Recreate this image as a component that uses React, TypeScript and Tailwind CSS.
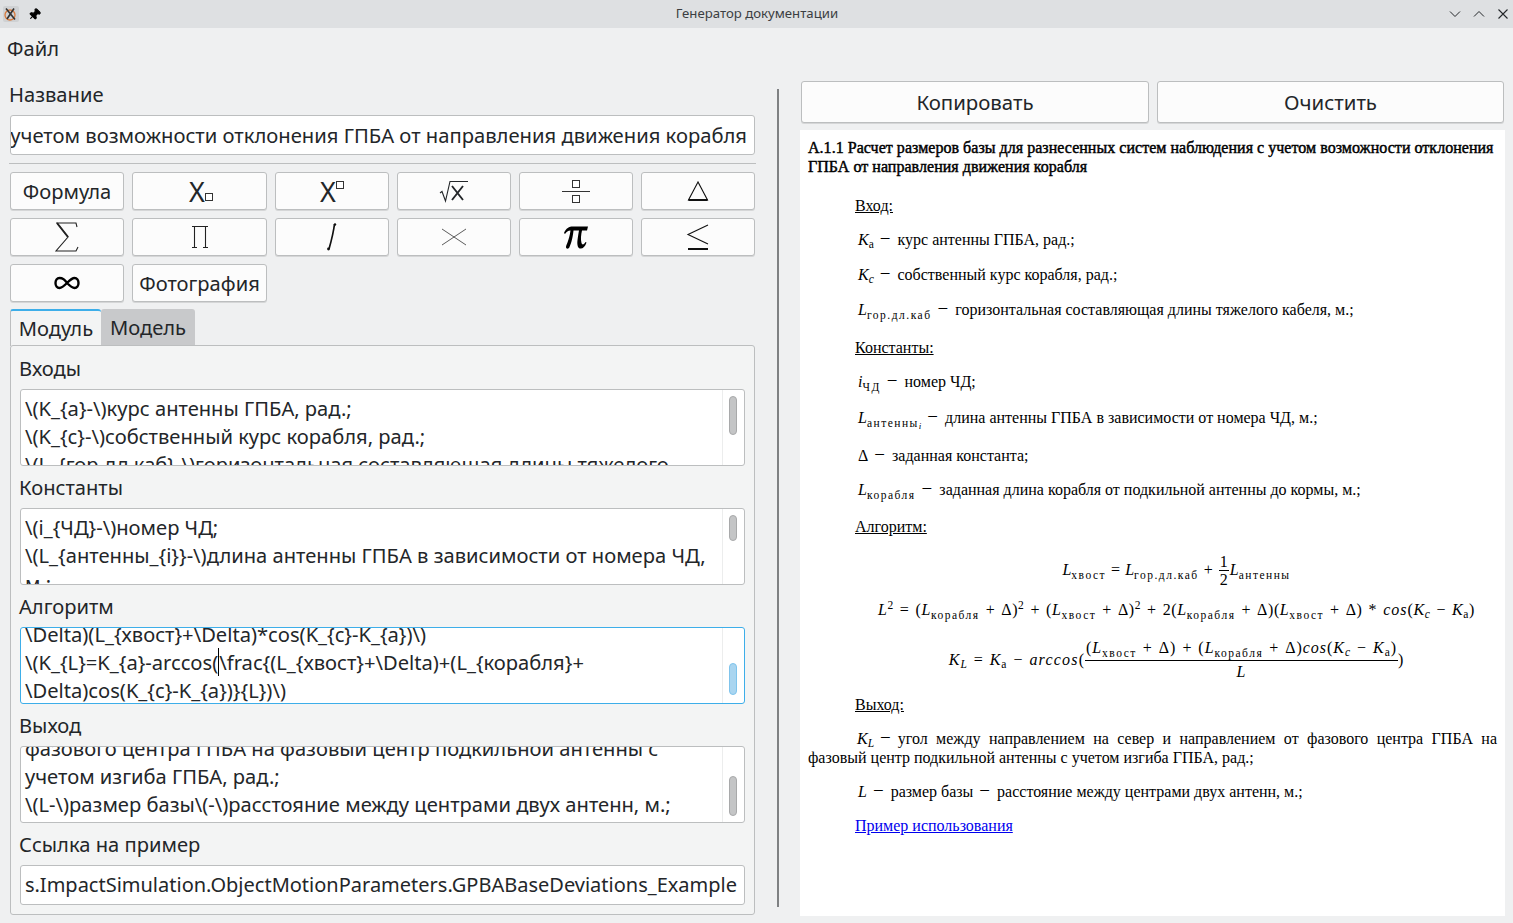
import { Pin } from "lucide-react";
import type { ReactNode } from "react";

const ui = "font-['Noto_Sans',sans-serif] text-[#232629]";

function Sq({ className }: { className: string }) {
    return <span className={`inline-block border border-[#333] bg-white ${className}`} />;
}

function Btn({ children, className = "" }: { children: ReactNode; className?: string }) {
    return (
        <button className={`flex items-center justify-center h-[38px] bg-[#fcfcfc] border border-[#bcbebf] rounded-[3px] shadow-[0_1px_0_#d5d6d7] overflow-hidden ${className}`}>
            {children}
        </button>
    );
}

function Area({ lines, offset, thumb, focus = false, cursor = false }: { lines: string[]; offset: string; thumb: string; focus?: boolean; cursor?: boolean }) {
    return (
        <div className={`flex h-[77px] bg-white rounded-[3px] border overflow-hidden ${focus ? "border-[#3daee9]" : "border-[#bcbebf]"}`}>
            <div className="flex-1 overflow-hidden pl-[4px] text-[20.15px] leading-[28px] whitespace-nowrap">
                <div className={offset}>
                    {lines.map((l, i) =>
                        cursor && i === 1 ? (
                            <div key={i}>
                                \(K_&#123;L&#125;=K_&#123;a&#125;-arccos(<span className="border-l border-black">\</span>frac&#123;(L_&#123;хвост&#125;+\Delta)+(L_&#123;корабля&#125;+
                            </div>
                        ) : (
                            <div key={i}>{l}</div>
                        )
                    )}
                </div>
            </div>
            <div className="w-[22px] shrink-0 border-l border-[#eceded] pl-[6px]">
                <div className={`w-[8px] rounded-full border ${focus ? "bg-[#a9d5f0] border-[#7fc4ec]" : "bg-[#c4c5c6] border-[#a8a9aa]"} ${thumb}`} />
            </div>
        </div>
    );
}

function Sub({ children }: { children: ReactNode }) {
    return <span className="text-[11.5px] leading-[0] align-[-4px] tracking-[1.5px]">{children}</span>;
}

// latin indices are italic, the cyrillic "а" index stays upright
function K({ s, up = false }: { s: string; up?: boolean }) {
    return (
        <span>
            <i>K</i>
            <span className={`text-[11.5px] leading-[0] align-[-3px] ${up ? "" : "italic"}`}>{s}</span>
        </span>
    );
}

function L({ s }: { s: string }) {
    return (
        <span>
            <i>L</i>
            <Sub>{s}</Sub>
        </span>
    );
}

function Sup() {
    return <span className="text-[11.5px] leading-[0] align-[6px]">2</span>;
}

function Op({ c }: { c: string }) {
    return <span className="mx-[5px]">{c}</span>;
}

function Op2({ c }: { c: string }) {
    return <span className="mx-[6px]">{c}</span>;
}

function Head({ children, className }: { children: ReactNode; className: string }) {
    return <p className={`pl-[47px] leading-[19px] underline ${className}`}>{children}</p>;
}

function Row({ children, className }: { children: ReactNode; className: string }) {
    return <p className={`pl-[50px] leading-[19px] ${className}`}>{children}</p>;
}

function Dash() {
    return <span className="ml-[6px] mr-[7px] text-[19px] leading-[0]">−</span>;
}

function Label({ children, className }: { children: ReactNode; className: string }) {
    return <div className={`h-[28px] leading-[28px] -ml-px ${className}`}>{children}</div>;
}

export default function App() {
    return (
        <div className={`flex flex-col h-screen w-full bg-[#eff0f1] overflow-hidden ${ui}`}>
            <div className="flex items-center shrink-0 h-[28px] bg-[#dee0e2] px-[3px]">
                <div className="flex items-center justify-center w-[16px] h-[16px] bg-[#cfd1d3] rounded-[2px]">
                    <svg width="14" height="14" viewBox="0 0 14 14">
                        <circle cx="6" cy="8" r="5" fill="none" stroke="#d9793a" strokeWidth="1.3" />
                        <path d="M2 1.5 L11 12.5 M10 1.5 L3 12" stroke="#333" strokeWidth="1.6" />
                    </svg>
                </div>
                <Pin size={13} className="ml-[9px] rotate-45 text-black fill-black" />
                <div className="flex-1 text-center text-[13.2px] text-[#3b3e41] pl-[26px]">Генератор документации</div>
                <div className="flex items-center gap-[8px] -mr-[1px]">
                    <svg width="16" height="16" viewBox="0 0 16 16" fill="none" stroke="#232629" strokeWidth="1">
                        <path d="M3 5.5 L8 10.5 L13 5.5" />
                    </svg>
                    <svg width="16" height="16" viewBox="0 0 16 16" fill="none" stroke="#232629" strokeWidth="1">
                        <path d="M3 10.5 L8 5.5 L13 10.5" />
                    </svg>
                    <svg width="16" height="16" viewBox="0 0 16 16" fill="none" stroke="#232629" strokeWidth="1.1">
                        <path d="M3.5 3.5 L12.5 12.5 M12.5 3.5 L3.5 12.5" />
                    </svg>
                </div>
            </div>

            <div className="shrink-0 h-[42px] flex items-center pl-[7px] text-[20.15px] pb-[2px]">Файл</div>

            <div className="flex flex-1 min-h-0 text-[20.15px]">
                <div className="flex flex-col w-[745px] ml-[10px] shrink-0">
                    <Label className="mt-[10px]">Название</Label>
                    <div className="flex items-center justify-end h-[40px] mt-[7px] bg-white border border-[#bcbebf] rounded-[3px] overflow-hidden pr-[7px] whitespace-nowrap text-[20.22px]">
                        с учетом возможности отклонения ГПБА от направления движения корабля
                    </div>
                    <div className="h-px bg-[#bcbebf] mt-[8px] -mx-[1px]" />
                    <div className="grid grid-cols-[114px_135px_114px_114px_114px_114px] gap-x-[8px] gap-y-[8px] mt-[8px]">
                        <Btn>Формула</Btn>
                        <Btn>
                            <span className="text-[27px] leading-none font-['Noto_Sans'] ml-[3px]">X</span>
                            <Sq className="w-[8px] h-[8px] mt-[12px]" />
                        </Btn>
                        <Btn>
                            <span className="text-[27px] leading-none font-['Noto_Sans']">X</span>
                            <Sq className="w-[8px] h-[8px] mb-[12px]" />
                        </Btn>
                        <Btn>
                            <svg width="30" height="24" viewBox="0 0 30 24" fill="none" stroke="#232629" strokeWidth="1.1">
                                <path d="M1 14 L3 12.5 L6.5 22 L11 2.5 H29" />
                                <path d="M13 7 L24 21 M24 7 L13 21" strokeWidth="1.9" />
                            </svg>
                        </Btn>
                        <Btn>
                            <div className="flex flex-col items-center gap-[3px]">
                                <Sq className="w-[8px] h-[8px]" />
                                <div className="w-[28px] h-px bg-[#333]" />
                                <Sq className="w-[8px] h-[8px]" />
                            </div>
                        </Btn>
                        <Btn>
                            <svg width="24" height="24" viewBox="0 0 24 24" fill="none" stroke="#111" strokeWidth="1.1">
                                <path d="M12 3 L2.5 21 H21.5 Z" />
                                <path d="M2.5 21 H21.5" strokeWidth="2" />
                            </svg>
                        </Btn>
                        <Btn>
                            <svg width="26" height="32" viewBox="0 0 26 32" fill="none" stroke="#222">
                                <path d="M23 6 L22 2 H3 L14 16 L2 30 H22 L24 26" strokeWidth="1.1" />
                                <path d="M3 2 L14 16" strokeWidth="2" />
                            </svg>
                        </Btn>
                        <Btn>
                            <svg width="18" height="24" viewBox="0 0 18 24" fill="none" stroke="#222" strokeWidth="1.1">
                                <path d="M1 1.5 H17 M3.5 1.5 V22.5 M14.5 1.5 V22.5 M1 22.5 H6 M12 22.5 H17" />
                            </svg>
                        </Btn>
                        <Btn>
                            <svg width="14" height="30" viewBox="0 0 14 30" fill="none" stroke="#111">
                                <path d="M9.5 2 C8.5 10 6 20 4 27" strokeWidth="1.7" />
                                <circle cx="10" cy="2.5" r="1.2" fill="#111" stroke="none" />
                                <circle cx="3.5" cy="27" r="1.4" fill="#111" stroke="none" />
                            </svg>
                        </Btn>
                        <Btn>
                            <svg width="26" height="18" viewBox="0 0 26 18" fill="none" stroke="#333" strokeWidth="0.8">
                                <path d="M1 1 L25 17 M25 1 L1 17" />
                            </svg>
                        </Btn>
                        <Btn>
                            <svg width="26" height="26" viewBox="0 0 26 26" fill="#000">
                                <path d="M1 9 C3 4 6 2.5 10 2.5 L25 2.5 L24 6.5 L19 6.5 C18 11 17.5 15 18.5 19 C19 21 21 21 22.5 18 L23.5 18.5 C22 23 19.5 25 17 24.5 C14.5 24 14 20 14.5 16 C15 12 15.5 9 16 6.5 L10.5 6.5 C10 12 8.5 19 6.5 23 C6 25 3 25.5 3 23 C3 21 6 17 7.5 6.5 C5 6.5 3.5 8 2 10 Z" />
                            </svg>
                        </Btn>
                        <Btn>
                            <svg width="24" height="28" viewBox="0 0 24 28" fill="none" stroke="#111" strokeWidth="1.1">
                                <path d="M22 2 L2 11.5 L22 21" />
                                <path d="M2 26 H22" strokeWidth="1.8" />
                            </svg>
                        </Btn>
                        <Btn>
                            <svg width="26" height="14" viewBox="0 0 26 14" fill="none" stroke="#000" strokeWidth="2.4">
                                <path d="M13 7 C10 2 7 2 5.5 2 C3 2 1.5 4.5 1.5 7 C1.5 9.5 3 12 5.5 12 C8 12 10 10 13 7 C16 4 18 2 20.5 2 C23 2 24.5 4.5 24.5 7 C24.5 9.5 23 12 20.5 12 C18 12 16 10 13 7 Z" />
                            </svg>
                        </Btn>
                        <Btn>Фотография</Btn>
                    </div>

                    <div className="flex mt-[7px] h-[37px]">
                        <div className="w-[91px] flex items-center justify-center bg-[#f3f4f4] border-t-2 border-[#3daee9] rounded-t-[3px] border-l border-l-[#bcbebf] pb-[1px]">Модуль</div>
                        <div className="w-[94px] flex items-center justify-center bg-[#c8c9cb] rounded-t-[3px] border-b border-[#bcbebf]">Модель</div>
                    </div>

                    <div className="flex flex-col h-[570px] -mt-px bg-[#f3f4f4] border border-[#bcbebf] rounded-[3px] px-[9px]">
                        <Label className="mt-[8px]">Входы</Label>
                        <div className="mt-[7px]">
                            <Area
                                offset="mt-[4px]"
                                thumb="mt-[6px] h-[39px]"
                                lines={[
                                    "\\(K_{a}-\\)курс антенны ГПБА, рад.;",
                                    "\\(K_{c}-\\)собственный курс корабля, рад.;",
                                    "\\(L_{гор.дл.каб}-\\)горизонтальная составляющая длины тяжелого",
                                ]}
                            />
                        </div>
                        <Label className="mt-[7px]">Константы</Label>
                        <div className="mt-[7px]">
                            <Area
                                offset="mt-[4px]"
                                thumb="mt-[6px] h-[26px]"
                                lines={[
                                    "\\(i_{ЧД}-\\)номер ЧД;",
                                    "\\(L_{антенны_{i}}-\\)длина антенны ГПБА в зависимости от номера ЧД,",
                                    "м.;",
                                ]}
                            />
                        </div>
                        <Label className="mt-[7px]">Алгоритм</Label>
                        <div className="mt-[7px]">
                            <Area
                                focus
                                cursor
                                offset="-mt-[8px]"
                                thumb="mt-[35px] h-[32px]"
                                lines={[
                                    "\\Delta)(L_{хвост}+\\Delta)*cos(K_{c}-K_{a})\\)",
                                    "",
                                    "\\Delta)cos(K_{c}-K_{a})}{L})\\)",
                                ]}
                            />
                        </div>
                        <Label className="mt-[7px]">Выход</Label>
                        <div className="mt-[7px]">
                            <Area
                                offset="-mt-[13px]"
                                thumb="mt-[29px] h-[40px]"
                                lines={[
                                    "фазового центра ГПБА на фазовый центр подкильной антенны с",
                                    "учетом изгиба ГПБА, рад.;",
                                    "\\(L-\\)размер базы\\(-\\)расстояние между центрами двух антенн, м.;",
                                ]}
                            />
                        </div>
                        <Label className="mt-[7px]">Ссылка на пример</Label>
                        <div className="flex items-center justify-end h-[40px] mt-[7px] bg-white border border-[#bcbebf] rounded-[3px] overflow-hidden pr-[7px] whitespace-nowrap text-[20px]">
                            s.ImpactSimulation.ObjectMotionParameters.GPBABaseDeviations_Example
                        </div>
                    </div>
                </div>

                <div className="w-[2px] h-[818px] mt-[19px] ml-[22px] bg-[#7f8183] shrink-0" />

                <div className="flex flex-col ml-[21px] w-[705px] mt-[11px]">
                    <div className="flex gap-[8px] px-[1px] text-[20.4px]">
                        <Btn className="w-[348px] h-[42px]">Копировать</Btn>
                        <Btn className="w-[347px] h-[42px]">Очистить</Btn>
                    </div>
                    <div className="h-[786px] mt-[7px] bg-white px-[8px] font-['Liberation_Serif',serif] text-[16px] text-black">
                        <p className="pt-[8px] leading-[19px] tracking-[0.03px] [-webkit-text-stroke:0.45px_black]">
                            А.1.1 Расчет размеров базы для разнесенных систем наблюдения с учетом возможности отклонения ГПБА от направления движения корабля
                        </p>
                        <Head className="mt-[20px]">Вход:</Head>
                        <Row className="mt-[15px]"><K s="а" up /><Dash />курс антенны ГПБА, рад.;</Row>
                        <Row className="mt-[16px]"><K s="c" /><Dash />собственный курс корабля, рад.;</Row>
                        <Row className="mt-[16px]"><L s="гор.дл.каб" /><Dash />горизонтальная составляющая длины тяжелого кабеля, м.;</Row>
                        <Head className="mt-[19px]">Константы:</Head>
                        <Row className="mt-[15px]"><i>i</i><Sub>ЧД</Sub><Dash />номер ЧД;</Row>
                        <Row className="mt-[17px]"><L s="антенны" /><span className="text-[9px] leading-[0] align-[-6px] italic">i</span><Dash />длина антенны ГПБА в зависимости от номера ЧД, м.;</Row>
                        <Row className="mt-[19px]">Δ<Dash />заданная константа;</Row>
                        <Row className="mt-[15px]"><L s="корабля" /><Dash />заданная длина корабля от подкильной антенны до кормы, м.;</Row>
                        <Head className="mt-[18px]">Алгоритм:</Head>

                        <div className="flex items-center justify-center h-[40px] mt-[14px] pl-[48px] whitespace-nowrap">
                            <L s="хвост" /><Op c="=" /><L s="гор.дл.каб" /><Op c="+" />
                            <span className="inline-flex flex-col items-center leading-[17px] mx-[1px]">
                                <span className="border-b border-black px-[1px]">1</span>
                                <span>2</span>
                            </span>
                            <L s="антенны" />
                        </div>
                        <p className="text-center mt-[9px] pl-[48px] leading-[22px] whitespace-nowrap tracking-[0.6px]">
                            <i>L</i><Sup /><Op2 c="=" />(<L s="корабля" /><Op2 c="+" />Δ)<Sup /><Op2 c="+" />(<L s="хвост" /><Op2 c="+" />Δ)<Sup /><Op2 c="+" />2(<L s="корабля" /><Op2 c="+" />Δ)(<L s="хвост" /><Op2 c="+" />Δ)<Op2 c="*" /><i className="tracking-[1px]">cos</i>(<K s="c" /><Op2 c="−" /><K s="а" up />)
                        </p>
                        <div className="flex items-center justify-center h-[44px] mt-[17px] pl-[48px] whitespace-nowrap tracking-[0.95px]">
                            <K s="L" /><Op2 c="=" /><K s="а" up /><Op2 c="−" /><i className="tracking-[1.2px]">arccos</i>(
                            <span className="inline-flex flex-col items-center leading-[22px]">
                                <span className="border-b border-black px-[1px] pb-[1px]">
                                    (<L s="хвост" /><Op2 c="+" />Δ)<Op2 c="+" />(<L s="корабля" /><Op2 c="+" />Δ)<i className="tracking-[1px]">cos</i>(<K s="c" /><Op2 c="−" /><K s="а" up />)
                                </span>
                                <i>L</i>
                            </span>
                            )
                        </div>

                        <Head className="mt-[13px]">Выход:</Head>
                        <p className="mt-[15px] leading-[19px] indent-[49px] text-justify">
                            <K s="L" /><Dash />угол между направлением на север и направлением от фазового центра ГПБА на фазовый центр подкильной антенны с учетом изгиба ГПБА, рад.;
                        </p>
                        <Row className="mt-[15px]"><i>L</i><Dash />размер базы<Dash />расстояние между центрами двух антенн, м.;</Row>
                        <p className="mt-[15px] pl-[47px] leading-[19px] underline text-[#0000ee]">Пример использования</p>
                    </div>
                </div>
            </div>
        </div>
    );
}
